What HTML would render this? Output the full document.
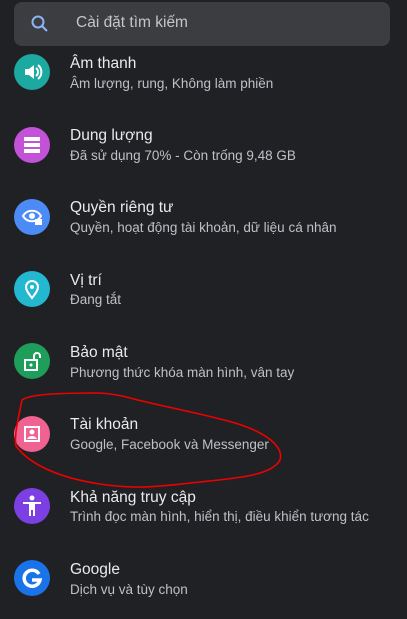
<!DOCTYPE html><html><head><meta charset="utf-8"><style>
body{margin:0;width:407px;height:619px;background:#202124;overflow:hidden;font-family:"Liberation Sans","Noto Sans CJK SC",sans-serif;position:relative}
.s{position:absolute;left:14px;top:2px;width:376px;height:44px;background:#3c3d40;border-radius:8px}
.s span{position:absolute;left:62px;top:12px;color:#c4c7c5;font-size:15.5px}
.c{position:absolute;left:14px;width:36px;height:36px;border-radius:50%}
.c svg{position:absolute;left:0;top:0}
.t{position:absolute;left:70px;color:#e8eaed;font-size:15.5px}
.u{position:absolute;left:70px;color:#bdc1c6;font-size:13.5px}
</style></head><body>
<div class="s"><svg style="position:absolute;left:16px;top:12px" width="20" height="20" viewBox="0 0 20 20"><circle cx="8" cy="8" r="5.5" fill="none" stroke="#8ab4f8" stroke-width="2"/><path d="M12 12l5 5" stroke="#8ab4f8" stroke-width="2.2"/></svg><span>Cài đặt tìm kiếm</span></div>

<div class="c" style="top:54px;background:#1ba9a0"><svg width="36" height="36"><path d="M11 15h4l5-4v14l-5-4h-4z" fill="#fff"/><path d="M22 14a5 5 0 0 1 0 8M24 11a9 9 0 0 1 0 14" stroke="#fff" stroke-width="2" fill="none"/></svg></div>
<div class="t" style="top:55px">Âm thanh</div><div class="u" style="top:76px">Âm lượng, rung, Không làm phiền</div>

<div class="c" style="top:127px;background:#c452d8"><svg width="36" height="36"><rect x="10" y="10" width="16" height="4" fill="#fff"/><rect x="10" y="16" width="16" height="4" fill="#fff"/><rect x="10" y="22" width="16" height="4" fill="#fff"/></svg></div>
<div class="t" style="top:127px">Dung lượng</div><div class="u" style="top:148px">Đã sử dụng 70% - Còn trống 9,48 GB</div>

<div class="c" style="top:199px;background:#4c8bf5"><svg width="36" height="36"><path d="M9 17c4-7 14-7 18 0c-4 7-14 7-18 0z" fill="none" stroke="#fff" stroke-width="2"/><circle cx="18" cy="17" r="3" fill="#fff"/><rect x="21" y="20" width="7" height="6" fill="#fff"/></svg></div>
<div class="t" style="top:199px">Quyền riêng tư</div><div class="u" style="top:220px">Quyền, hoạt động tài khoản, dữ liệu cá nhân</div>

<div class="c" style="top:271px;background:#24b8d0"><svg width="36" height="36"><path d="M18 27c-4-5-6-8-6-11a6 6 0 0 1 12 0c0 3-2 6-6 11z" fill="none" stroke="#fff" stroke-width="2"/><circle cx="18" cy="16" r="2" fill="#fff"/></svg></div>
<div class="t" style="top:272px">Vị trí</div><div class="u" style="top:292px">Đang tắt</div>

<div class="c" style="top:343px;background:#1e9e5a"><svg width="36" height="36"><rect x="11" y="17" width="12" height="10" fill="none" stroke="#fff" stroke-width="2"/><circle cx="17" cy="22" r="1.5" fill="#fff"/><path d="M20 17v-4a3 3 0 0 1 6 0v2" fill="none" stroke="#fff" stroke-width="2"/></svg></div>
<div class="t" style="top:344px">Bảo mật</div><div class="u" style="top:365px">Phương thức khóa màn hình, vân tay</div>

<div class="c" style="top:416px;background:#f06292"><svg width="36" height="36"><rect x="11" y="11" width="14" height="14" fill="none" stroke="#fff" stroke-width="2"/><circle cx="18" cy="16" r="2.5" fill="#fff"/><path d="M13 23c2-4 8-4 10 0" fill="#fff"/></svg></div>
<div class="t" style="top:416px">Tài khoản</div><div class="u" style="top:437px">Google, Facebook và Messenger</div>

<div class="c" style="top:488px;background:#7b3fe4"><svg width="36" height="36"><circle cx="18" cy="10" r="2.5" fill="#fff"/><path d="M9 14h18v2h-6v12h-2v-6h-2v6h-2v-12h-6z" fill="#fff"/></svg></div>
<div class="t" style="top:489px">Khả năng truy cập</div><div class="u" style="top:509px">Trình đọc màn hình, hiển thị, điều khiển tương tác</div>

<div class="c" style="top:560px;background:#1a73e8"><svg width="36" height="36"><path d="M25 14a8 8 0 1 0 1 6h-8" fill="none" stroke="#fff" stroke-width="3.5"/></svg></div>
<div class="t" style="top:561px">Google</div><div class="u" style="top:582px">Dịch vụ và tùy chọn</div>

<svg style="position:absolute;left:0;top:0" width="407" height="619"><path d="M96 393C60 393 30 394 22 400C18 420 14 435 16 446C30 465 60 478 100 484C140 490 160 486 200 482C240 478 272 475 280 460C284 446 265 432 235 423C200 413 160 406 130 398C115 394 105 393 96 393z" fill="none" stroke="#e00" stroke-width="1.6"/></svg>
</body></html>
